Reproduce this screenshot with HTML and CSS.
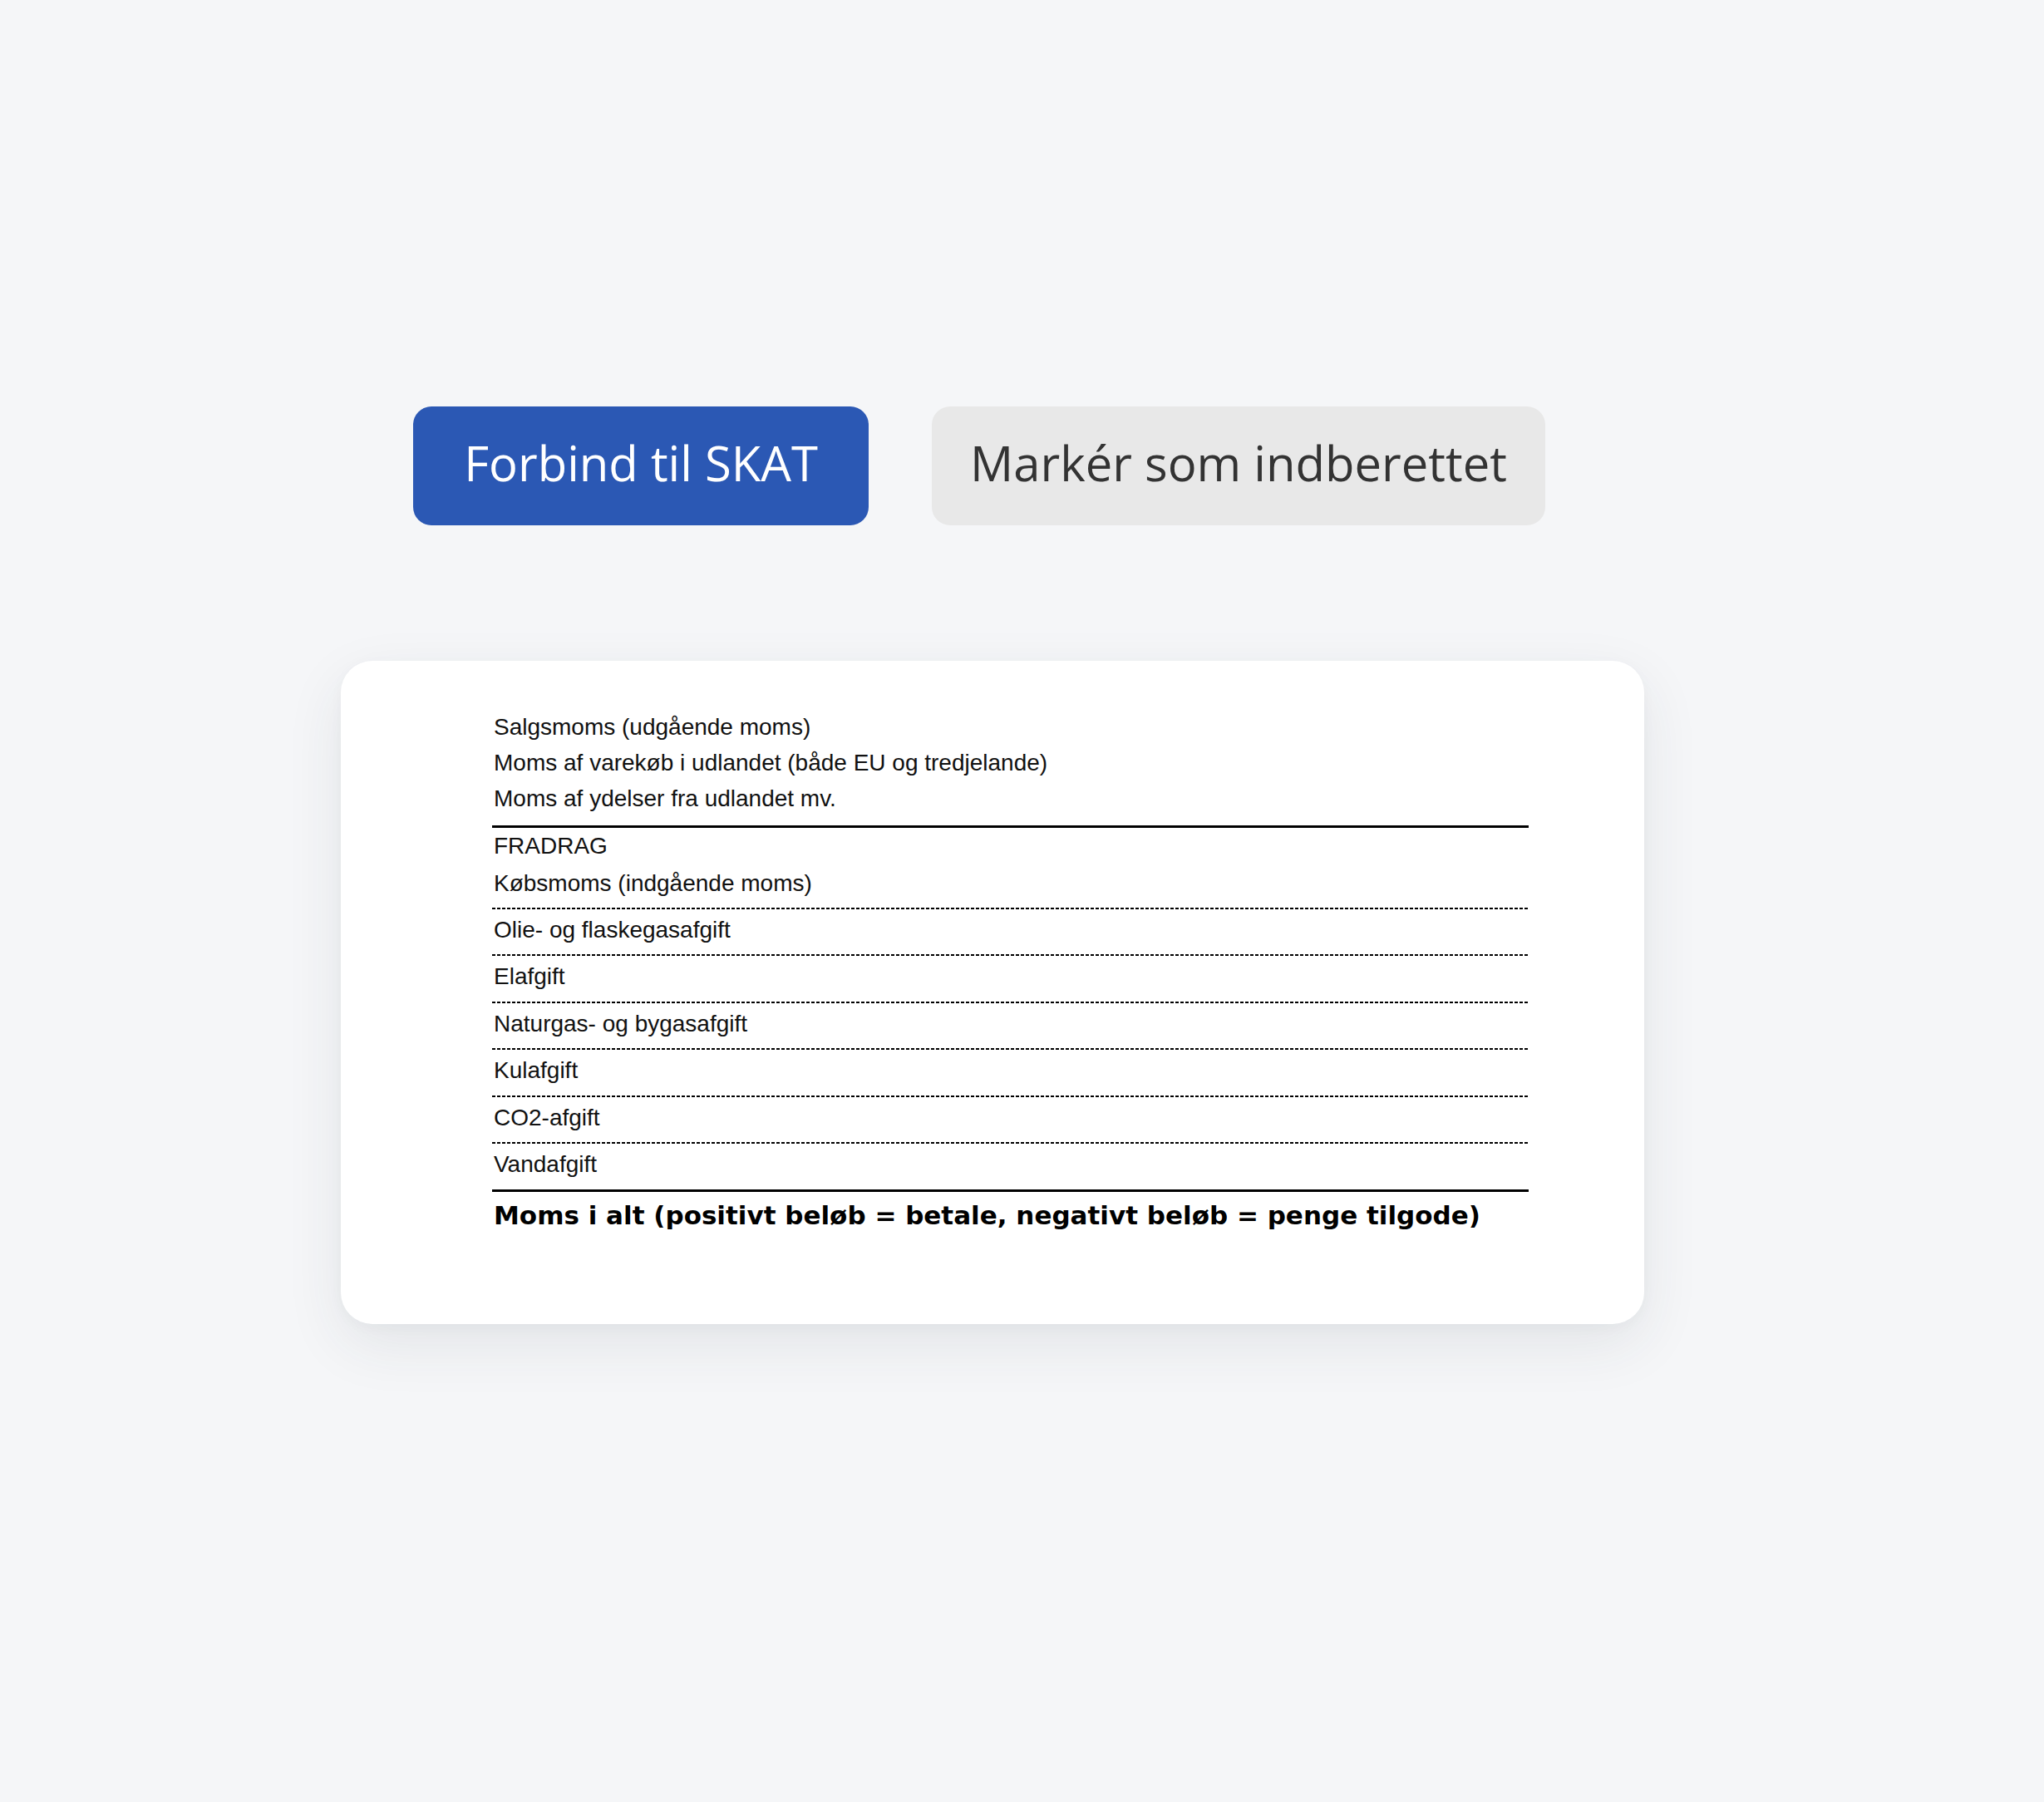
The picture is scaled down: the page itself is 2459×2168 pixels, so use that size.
FILE: index.html
```html
<!DOCTYPE html>
<html lang="da">
<head>
<meta charset="utf-8">
<title>Moms</title>
<link rel="stylesheet" href="styles.css">
</head>
<body>
<main class="page">
  <div class="actions">
    <button class="btn btn-primary">Forbind til SKAT</button>
    <button class="btn btn-secondary">Markér som indberettet</button>
  </div>
  <section class="card">
    <div class="form">
      <div class="group">
        <div class="line">Salgsmoms (udgående moms)</div>
        <div class="line">Moms af varekøb i udlandet (både EU og tredjelande)</div>
        <div class="line">Moms af ydelser fra udlandet mv.</div>
      </div>
      <div class="group group-deduct">
        <div class="line">FRADRAG</div>
        <div class="line line-last">Købsmoms (indgående moms)</div>
        <div class="row">Olie- og flaskegasafgift</div>
        <div class="row">Elafgift</div>
        <div class="row">Naturgas- og bygasafgift</div>
        <div class="row">Kulafgift</div>
        <div class="row">CO2-afgift</div>
        <div class="row">Vandafgift</div>
      </div>
      <div class="total">Moms i alt (positivt beløb = betale, negativt beløb = penge tilgode)</div>
    </div>
  </section>
</main>
</body>
</html>
```

FILE: styles.css
```css
html, body {
  margin: 0;
  padding: 0;
}

body {
  background: #f5f6f8;
  width: 2459px;
  height: 2168px;
  overflow: hidden;
}

.page {
  display: flex;
  flex-direction: column;
  align-items: flex-start;
  padding-top: 489px;
}

.actions {
  display: flex;
  gap: 76px;
  margin-left: 497px;
}

.btn {
  height: 143px;
  border: none;
  border-radius: 22px;
  font-family: "Open Sans", "Noto Sans", sans-serif;
  font-size: 58px;
  font-weight: 400;
  display: flex;
  align-items: center;
  justify-content: center;
  box-sizing: border-box;
  padding: 0 0 8px;
}

.btn-primary {
  background: #2b58b4;
  color: #ffffff;
  width: 548px;
}

.btn-secondary {
  background: #e8e8e8;
  color: #333333;
  width: 738px;
}

.card {
  margin-top: 163px;
  margin-left: 410px;
  width: 1568px;
  height: 798px;
  box-sizing: border-box;
  background: #ffffff;
  border-radius: 38px;
  box-shadow: 0 24px 70px rgba(40, 50, 70, 0.09), 0 4px 16px rgba(40, 50, 70, 0.03);
  padding: 58px 0 0 182px;
}

.form {
  width: 1247px;
  font-family: "Liberation Sans", Arial, sans-serif;
  font-size: 28px;
  color: #111111;
}

.line {
  line-height: 43px;
  padding-left: 2px;
}

.group {
  padding-bottom: 11px;
}

.group-deduct {
  border-top: 3px solid #000;
  padding-bottom: 0;
}

.line-last {
  padding-top: 2px;
  padding-bottom: 7.5px;
}

.row {
  line-height: 43px;
  padding: 5px 0 8.6px 2px;
  background: repeating-linear-gradient(90deg, #000 0 4px, transparent 4px 6px) top left / 100% 2px no-repeat;
}

.total {
  border-top: 3px solid #000;
  padding: 8px 0 0 2px;
  font-family: "DejaVu Sans", Verdana, sans-serif;
  font-weight: 700;
  font-size: 31px;
  line-height: 40px;
  color: #000;
}
```
